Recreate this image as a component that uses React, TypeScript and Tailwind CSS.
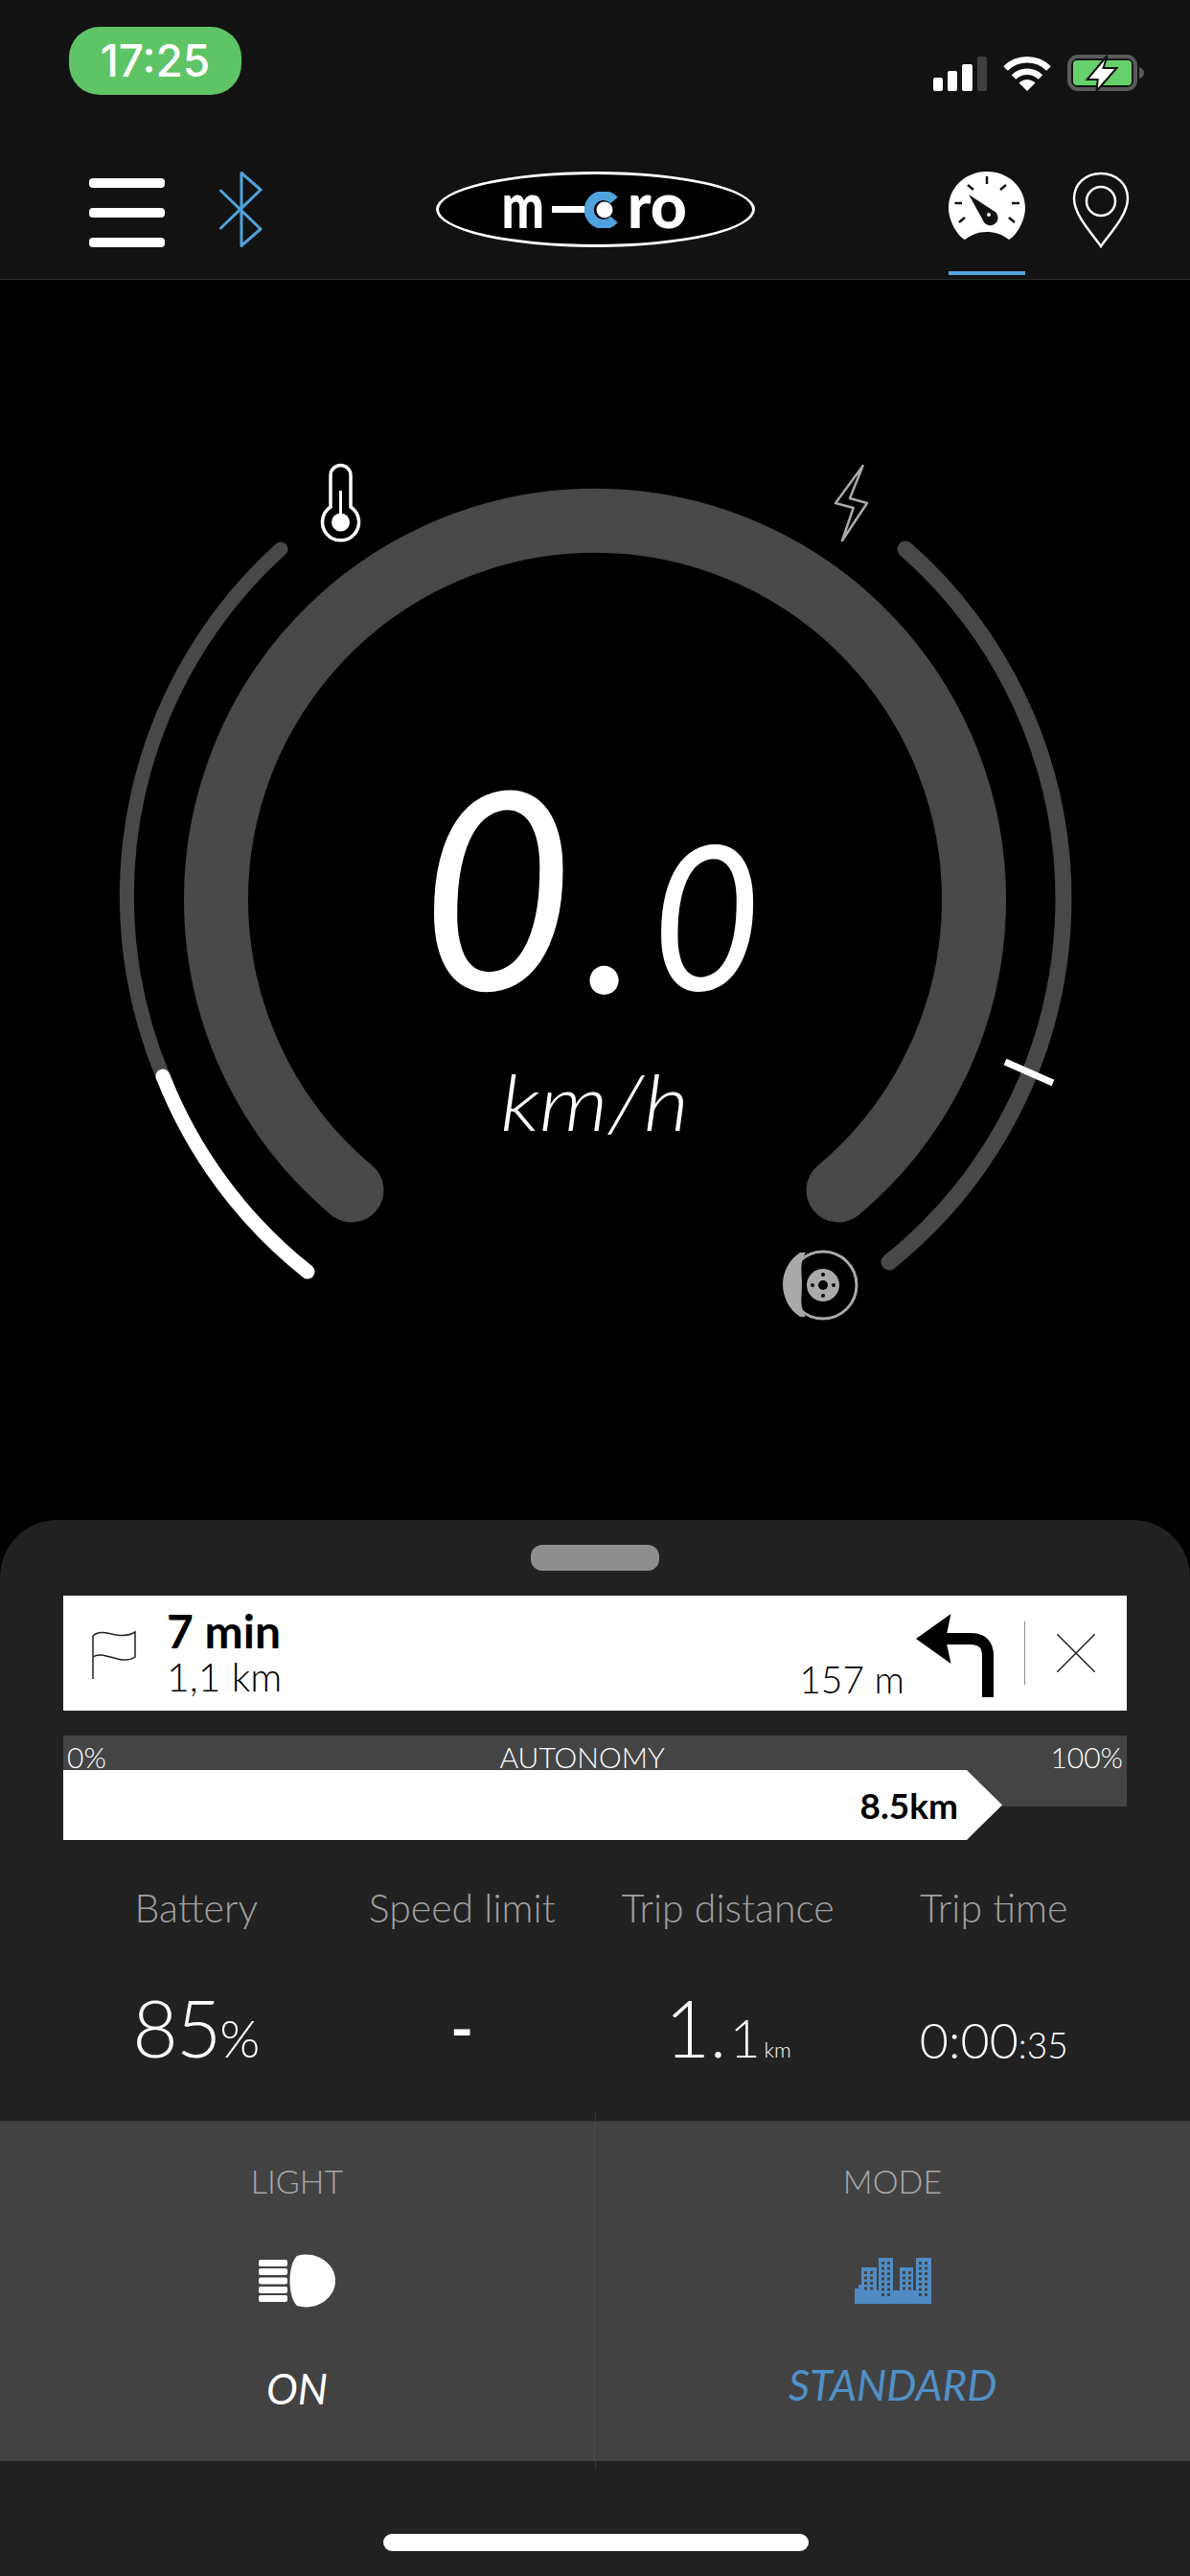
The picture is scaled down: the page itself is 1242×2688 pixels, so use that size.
import React from 'react';

const BLUE = '#4fa3dc';

const Stat = ({ label, children }: { label: string; children: React.ReactNode }) => (
  <div className="flex flex-col items-center">
    <span className="text-[41px] leading-[46px] font-light text-[#a0a0a0] whitespace-nowrap">{label}</span>
    <div className="mt-[60px] h-[90px] flex items-baseline justify-center text-white font-light whitespace-nowrap">{children}</div>
  </div>
);

const CityIcon = () => {
  const windows: React.ReactNode[] = [];
  [
    [10, 14, 2, 4],
    [28, 4, 2, 7],
    [50, 14, 2, 4],
    [67, 4, 2, 7],
  ].forEach(([x, y, cols, rows]) => {
    for (let c = 0; c < cols; c++) {
      for (let r = 0; r < rows; r++) {
        windows.push(<rect key={`${x}-${c}-${r}`} x={x + c * 6} y={y + r * 5.5} width="3" height="3" fill="#424242" />);
      }
    }
  });
  return (
    <svg width="80" height="48" viewBox="0 0 80 48">
      <path d="M0 48V32h4v-4h3V10h16v24h2V0h15v34h7V10h14v24h3V0h16v48z" fill="#4f8bc4" />
      {windows}
    </svg>
  );
};

export default function App() {
  return (
    <div className="w-[1242px] h-[2688px] bg-black flex flex-col overflow-hidden font-[Lato,sans-serif]">
      {/* header */}
      <header className="h-[292px] shrink-0 bg-[#121212] border-b border-[#2a2a2a]">
        <div className="h-[179px] pl-[72px] pr-[47px] pt-[28px] flex justify-between items-start">
          <div className="w-[180px] h-[71px] rounded-[32px] bg-[#5fc466] flex items-center justify-center text-white text-[46px] font-medium font-[Inter,sans-serif]">
            17:25
          </div>
          <div className="flex items-end pt-[29px]">
            <div className="flex items-end gap-[5px]">
              <div className="w-[10px] h-[14px] rounded-[2px] bg-white" />
              <div className="w-[10px] h-[21px] rounded-[2px] bg-white" />
              <div className="w-[11px] h-[28px] rounded-[2px] bg-white" />
              <div className="w-[10px] h-[36px] rounded-[2px] bg-[#3f3f3f]" />
            </div>
            <svg className="ml-[17px]" width="50" height="37" viewBox="0 0 50 37" fill="none" stroke="#fff" strokeWidth="6.5">
              <path d="M2.5 13.5A32 32 0 0 1 47.5 13.5" />
              <path d="M11 22.5A20 20 0 0 1 39 22.5" />
              <path d="M25 37L16.5 28.5A12 12 0 0 1 33.5 28.5Z" fill="#fff" stroke="none" />
            </svg>
            <svg className="ml-[17px]" width="81" height="38" viewBox="0 0 81 38">
              <rect x="2" y="2" width="69" height="34" rx="9" fill="none" stroke="#5a5a5a" strokeWidth="4" />
              <rect x="6" y="6" width="61" height="26" rx="4" fill="#66d06a" />
              <path d="M75 13c3 1 5 3 5 6s-2 5-5 6z" fill="#5a5a5a" />
              <path d="M41.6 1L20.6 26H31.7L30.5 38L51.5 14H37.6Z" fill="#fff" stroke="#121212" strokeWidth="2" />
            </svg>
          </div>
        </div>
        <nav className="h-[108px] pl-[93px] flex items-start">
          <div className="w-[79px] h-[72px] mt-[7px] flex flex-col justify-between">
            <div className="h-[10px] rounded-[4px] bg-white" />
            <div className="h-[10px] rounded-[4px] bg-white" />
            <div className="h-[10px] rounded-[4px] bg-white" />
          </div>
          <svg className="ml-[57px]" width="45" height="79" viewBox="0 0 45 79" fill="none" stroke={BLUE} strokeWidth="3" strokeLinejoin="round" strokeLinecap="round">
            <path d="M1.5 20L43 60 23 77.5V1.5L43 19 1.5 59" />
          </svg>
          <div className="ml-[181px] w-[333px] h-[79px] rounded-[50%] border-[3px] border-white bg-black flex items-center pl-[60px]">
            <span className="text-white text-[66px] leading-none font-black scale-x-[0.8] -translate-y-[6px]">m</span>
            <div className="ml-[2px] w-[34px] h-[7px] bg-white" />
            <svg width="38" height="38" viewBox="0 0 38 38">
              <path d="M31 9A15 15 0 1 0 31 29" fill="none" stroke={BLUE} strokeWidth="10" />
              <circle cx="21" cy="19" r="8.500" fill="#fff" />
            </svg>
            <span className="ml-[7px] text-white text-[66px] leading-none font-black -translate-y-[6px]">ro</span>
          </div>
          <div className="ml-[202px] w-[80px] h-full flex flex-col justify-between">
            <svg width="80" height="71" viewBox="0 0 80 71">
              <path d="M17 71C8 66 0 50 0 38 0 16 18 0 40 0s40 16 40 38c0 12-8 28-17 33-8-6-15-8-23-8s-15 2-23 8z" fill="#fff" />
              <path d="M40 5v8M6.500 33H14M66 33h8M20 14l6 5M60 14l-6 5M11 53l6-5M69 53l-6-5" stroke="#121212" strokeWidth="2.500" fill="none" />
              <path d="M21 24L47 41A8 8 0 1 1 36 51Z" fill="#121212" />
              <circle cx="42" cy="45" r="2" fill="#fff" />
            </svg>
            <div className="h-[4px] bg-[#4fa3dc]" />
          </div>
          <svg className="ml-[49px]" width="60" height="80" viewBox="0 0 60 80" fill="none" stroke="#fff" strokeWidth="2.500">
            <path d="M30 78C22 66 2 46 2 28 2 13 14 2 30 2s28 11 28 26c0 18-20 38-28 50z" />
            <circle cx="30" cy="31" r="15" />
          </svg>
        </nav>
      </header>

      {/* gauge */}
      <main className="relative h-[1294px] shrink-0 flex flex-col items-center">
        <svg className="absolute inset-0" width="1242" height="1294" viewBox="0 292 1242 1294" fill="none">
          <path d="M367 1242A395.500 395.500 0 1 1 875 1242" stroke="#484848" strokeWidth="67" strokeLinecap="round" />
          <path d="M170 1123A488 488 0 0 1 293 573" stroke="#484848" strokeWidth="15" strokeLinecap="round" />
          <path d="M321 1327A488 488 0 0 1 170 1123" stroke="#fff" strokeWidth="15" strokeLinecap="round" />
          <path d="M945 573A486 486 0 0 1 928 1317" stroke="#484848" strokeWidth="17" strokeLinecap="round" />
          <path d="M1049 1108L1099 1130" stroke="#fff" strokeWidth="7" />
          {/* temperature */}
          <path d="M345 529V496A10.500 10.500 0 0 1 366 496V529A19 19 0 1 1 345 529Z" stroke="#fff" strokeWidth="3.500" />
          <path d="M355.500 512V540" stroke="#fff" strokeWidth="3" />
          <circle cx="355.500" cy="545" r="9.500" fill="#fff" />
          {/* power */}
          <path d="M900.600 486L872 525 890.700 530 879 564 905 525 887 520Z" stroke="#aaa" strokeWidth="2.500" strokeLinejoin="round" />
          {/* brake */}
          <circle cx="859" cy="1341" r="35" stroke="#aaa" strokeWidth="3" />
          <path d="M835 1307C824 1314 817 1327 817 1340 817 1354 824 1367 835 1374H841C834 1364 837 1352 837 1340 837 1328 834 1317 841 1307Z" fill="#aaa" />
          <circle cx="859" cy="1341" r="17" fill="#aaa" />
          <circle cx="859" cy="1341" r="5" fill="#000" />
          <circle cx="859" cy="1330" r="2" fill="#000" />
          <circle cx="859" cy="1352" r="2" fill="#000" />
          <circle cx="848" cy="1341" r="2" fill="#000" />
          <circle cx="870" cy="1341" r="2" fill="#000" />
        </svg>
        <div className="relative mt-[480px] mr-[9px] flex items-baseline italic text-white font-normal leading-none">
          <span className="text-[288px] leading-[300px] scale-x-[0.95]">0</span>
          <span className="text-[240px] leading-none not-italic mr-[17px] translate-y-[3px]">.</span>
          <span className="text-[210px] leading-none scale-x-[0.93]">0</span>
        </div>
        <span className="relative mt-[37px] text-[80px] leading-none italic font-light text-white scale-x-[1.15]">km/h</span>
      </main>

      {/* bottom sheet */}
      <section className="flex-1 rounded-t-[60px] bg-[#212121] flex flex-col">
        <div className="mt-[26px] mx-auto w-[134px] h-[27px] rounded-[12px] bg-[#8e8e8e]" />
        <div className="mt-[26px] mx-[66px] h-[120px] bg-white flex items-center pl-[30px] pr-[33px]">
          <svg width="46" height="53" viewBox="0 0 46 53" fill="none" stroke="#222" strokeWidth="1.500">
            <path d="M1 53V8C12-2 28 14 45 4V30C30 40 12 22 1 30" />
          </svg>
          <div className="ml-[32px] flex flex-col text-black">
            <span className="text-[48px] leading-[50px] font-bold">7 min</span>
            <span className="text-[41px] leading-[46px] font-light">1,1 km</span>
          </div>
          <span className="ml-auto self-end mb-[10px] text-[39px] leading-[46px] font-light text-black">157 m</span>
          <svg className="ml-[12px] mt-[5px]" width="81" height="87" viewBox="0 0 81 87">
            <path d="M0 26L36.500 0 31 26 36.500 52Z" fill="#000" />
            <path d="M31 26H57Q75 26 75 44V87" fill="none" stroke="#000" strokeWidth="12" />
          </svg>
          <div className="ml-[32px] w-px h-[66px] bg-[#8a8a8a]" />
          <svg className="ml-[33px]" width="40" height="40" viewBox="0 0 40 40" stroke="#222" strokeWidth="1.500">
            <path d="M0 0L40 40M40 0L0 40" />
          </svg>
        </div>

        <div className="relative mt-[26px] mx-[66px] h-[74px] bg-[#444444] flex items-start justify-between px-[4px] text-white font-light text-[30px] leading-[36px]">
          <span className="mt-[4px]">0%</span>
          <span className="mt-[4px] ml-[8px]">AUTONOMY</span>
          <span className="mt-[4px]">100%</span>
          <div className="absolute left-0 top-[36px] w-[980px] h-[73px] bg-white flex items-center justify-end pr-[46px] text-black font-bold text-[37px] [clip-path:polygon(0_0,943px_0,100%_50%,943px_100%,0_100%)]">
            8.5km
          </div>
        </div>

        <div className="mt-[83px] mx-[66px] grid grid-cols-4">
          <Stat label="Battery">
            <span className="text-[82px] leading-none tracking-[-2px]">85</span>
            <span className="text-[54px] leading-none">%</span>
          </Stat>
          <Stat label="Speed limit">
            <span className="text-[64px] leading-none font-bold translate-y-[10px]">-</span>
          </Stat>
          <Stat label="Trip distance">
            <span className="text-[82px] leading-none">1</span>
            <span className="text-[70px] leading-none">.</span>
            <span className="text-[55px] leading-none ml-[4px]">1</span>
            <span className="text-[22px] leading-none ml-[4px]">km</span>
          </Stat>
          <Stat label="Trip time">
            <div className="pt-[28px] flex items-baseline">
              <span className="text-[52px] leading-none">0:00</span>
              <span className="text-[37px] leading-none">:35</span>
            </div>
          </Stat>
        </div>

        <div className="mt-auto relative">
          <div className="absolute left-[621px] -top-[8px] w-px h-[371px] bg-[#3a3a3a]" />
          <div className="relative z-10 h-[355px] mb-[120px] bg-[#424242] border-t border-[#383838] grid grid-cols-2 divide-x divide-[#4a4a4a]">
            <div className="flex flex-col items-center pt-[42px]">
              <span className="text-[34px] leading-[40px] font-light text-[#a8a8a8]">LIGHT</span>
              <svg className="mt-[56px]" width="80" height="56" viewBox="0 0 80 56">
                <path d="M40 2C60-4 80 10 80 28S60 60 40 54C30 45 30 11 40 2Z" fill="#fff" />
                <rect x="0" y="6" width="30" height="7" rx="2" fill="#fff" />
                <rect x="0" y="15" width="30" height="7" rx="2" fill="#fff" />
                <rect x="0" y="24.500" width="30" height="7" rx="2" fill="#fff" />
                <rect x="0" y="34" width="30" height="7" rx="2" fill="#fff" />
                <rect x="0" y="43" width="30" height="7" rx="2" fill="#fff" />
              </svg>
              <span className="mt-[59px] text-[44px] leading-[50px] italic text-white">ON</span>
            </div>
            <div className="flex flex-col items-center pt-[42px]">
              <span className="text-[34px] leading-[40px] font-light text-[#a8a8a8]">MODE</span>
              <div className="mt-[60px]">
                <CityIcon />
              </div>
              <span className="mt-[59px] text-[44px] leading-[50px] italic text-[#5090c8]">STANDARD</span>
            </div>
          </div>
          <div className="absolute z-10 bottom-[26px] left-[400px] w-[444px] h-[18px] rounded-full bg-white" />
        </div>
      </section>
    </div>
  );
}
